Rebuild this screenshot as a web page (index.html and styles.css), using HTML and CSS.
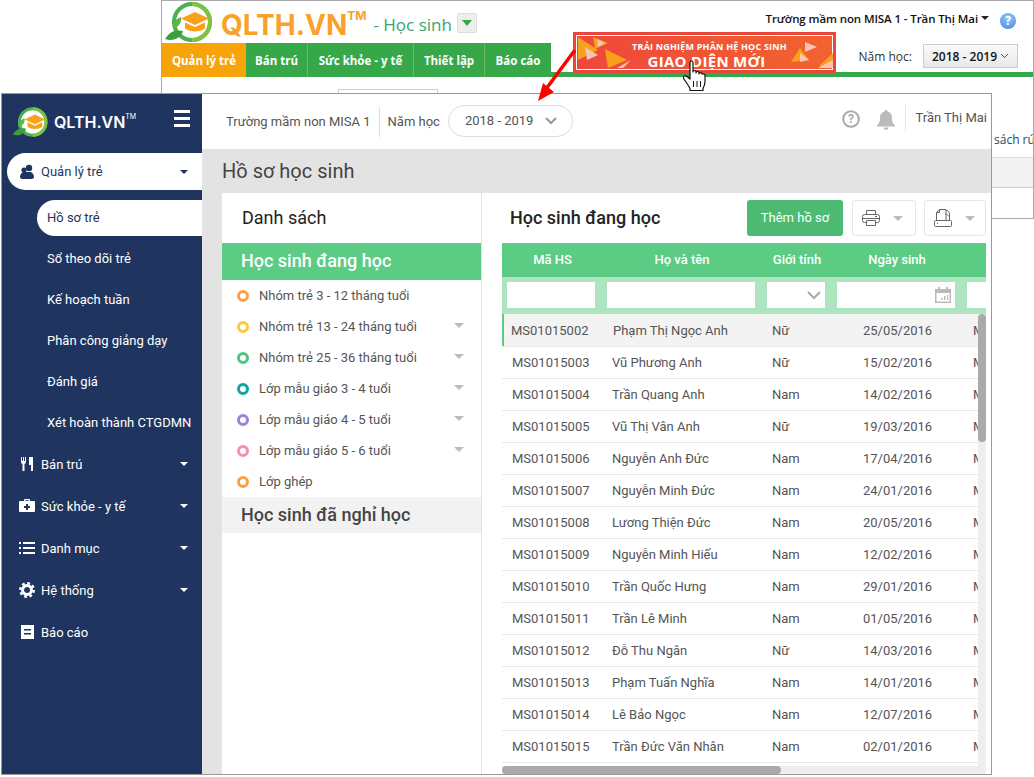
FILE: index.html
```html
<!DOCTYPE html>
<html lang="vi">

<head>
    <meta charset="UTF-8">
    <title>QLTH.VN - Hồ sơ học sinh</title>
    <link rel="stylesheet" href="styles.css">
</head>

<body>
    <svg class="defs" width="0" height="0">
        <symbol id="logo" viewBox="0 0 50 40">
            <circle cx="28" cy="20" r="18" fill="#fff" stroke="#4caf50" stroke-width="4" />
            <path d="M28 2a18 18 0 0 1 0 36" fill="none" stroke="#7cc243" stroke-width="4" />
            <path d="M1 37c4-7 10-10 18-8-2 7-10 11-18 8z" fill="#3f9e3c" />
            <path d="M9 27c-1-5 2-10 8-12 1 5-2 10-8 12z" fill="#5fb548" />
            <path d="M31 10l14 6.500-14 6.500-14-6.500z" fill="#f9a11b" />
            <path d="M21 20.500l10 4.500 10-4.500v6c-5 4-15 4-20 0z" fill="#f9a11b" />
        </symbol>
    </svg>

    <!-- man hinh cu -->
    <div class="old_win">
        <div class="old_top">
            <svg class="old_logo"><use href="#logo" /></svg>
            <span class="old_brand">QLTH.VN<sup>TM</sup></span>
            <span class="old_role">- Học sinh</span>
            <span class="role_btn"><i></i></span>
            <span class="old_user">Trường mầm non MISA 1 - Trần Thị Mai <i></i></span>
            <span class="old_help">?</span>
        </div>
        <div class="old_bar">
            <a href="javascript:;" class="active">Quản lý trẻ</a>
            <a href="javascript:;">Bán trú</a>
            <a href="javascript:;">Sức khỏe - y tế</a>
            <a href="javascript:;">Thiết lập</a>
            <a href="javascript:;">Báo cáo</a>
            <div class="old_year">
                <span>Năm học:</span>
                <b>2018 - 2019 <svg width="9" height="6" viewBox="0 0 9 6"><path d="M1 1l3.500 3.500L8 1" fill="none" stroke="#555" /></svg></b>
            </div>
        </div>
        <div class="old_input"></div>
        <div class="old_note">sách rút</div>
        <div class="old_thead"></div>
    </div>

    <div class="promo">
        <svg class="promo_bg" viewBox="0 0 257 35">
            <path d="M2 2l20 13L2 25z" fill="#f9a11b" />
            <path d="M9 12l13 8-11 5z" fill="#f7c6b0" />
            <path d="M17 2l15 6-13 6z" fill="#f9a11b" />
            <path d="M21 4l8 4-7 4z" fill="#f7c6b0" />
            <path d="M29 14l22 11-19 8z" fill="#f9a11b" />
            <path d="M41 33l14-8-8 8z" fill="#f7c6b0" />
            <path d="M229 7l12 5-12 5z" fill="#f7c6b0" />
            <path d="M215 27l9-14 9 12z" fill="#f9a11b" />
            <path d="M224 18l9 7-9 2z" fill="#f7c6b0" />
            <path d="M244 30l13-12v15h-13z" fill="#f9a11b" />
            <path d="M257 25l-15 8h15z" fill="#f7c6b0" />
        </svg>
        <span class="promo_sm">TRẢI NGHIỆM PHÂN HỆ HỌC SINH</span>
        <span class="promo_lg">GIAO DIỆN MỚI</span>
    </div>

    <svg class="arrow" width="50" height="60" viewBox="0 0 50 60">
        <path d="M39 3L10 42" stroke="#f00" stroke-width="3.500" fill="none" />
        <path d="M2 54L7 36 18 45z" fill="#f00" />
    </svg>

    <!-- man hinh moi -->
    <div class="new_win">
        <aside class="side">
            <div class="side_head">
                <svg class="side_logo"><use href="#logo" /></svg>
                <span class="side_brand">QLTH.VN<sup>TM</sup></span>
                <span class="burger"><i></i><i></i><i></i></span>
            </div>
            <a href="javascript:;" class="menu open">
                <svg class="ico" viewBox="0 0 16 16"><circle cx="10" cy="4" r="3.200" /><path d="M4 15c-1.500 0-3-.5-3-2 0-3 2-5 4-5h6c2 0 4 2 4 5 0 1.500-1.500 2-3 2z" /><circle cx="5" cy="6" r="2.600" /></svg>
                <span>Quản lý trẻ</span><i class="caret"></i>
            </a>
            <div class="sub">
                <a href="javascript:;" class="current">Hồ sơ trẻ</a>
                <a href="javascript:;">Sổ theo dõi trẻ</a>
                <a href="javascript:;">Kế hoạch tuần</a>
                <a href="javascript:;">Phân công giảng dạy</a>
                <a href="javascript:;">Đánh giá</a>
                <a href="javascript:;">Xét hoàn thành CTGDMN</a>
            </div>
            <a href="javascript:;" class="menu">
                <svg class="ico" viewBox="0 0 16 16"><path d="M2 1v5c0 1 1 2 1.500 2v7h2V8C6 8 7 7 7 6V1H6v4H5V1H4v4H3V1zM10 1h4v14h-2V9h-2z" /></svg>
                <span>Bán trú</span><i class="caret"></i>
            </a>
            <a href="javascript:;" class="menu">
                <svg class="ico" viewBox="0 0 16 16"><path fill-rule="evenodd" d="M5 3V2a1 1 0 0 1 1-1h4a1 1 0 0 1 1 1v1h4a1 1 0 0 1 1 1v9a1 1 0 0 1-1 1H1a1 1 0 0 1-1-1V4a1 1 0 0 1 1-1zm1.200 0h3.600V2.200H6.200zM7 6v2H5v2h2v2h2v-2h2V8H9V6z" /></svg>
                <span>Sức khỏe - y tế</span><i class="caret"></i>
            </a>
            <a href="javascript:;" class="menu">
                <svg class="ico" viewBox="0 0 16 16"><path d="M0 2h2v2H0zM4 2h12v2H4zM0 7h2v2H0zM4 7h12v2H4zM0 12h2v2H0zM4 12h12v2H4z" /></svg>
                <span>Danh mục</span><i class="caret"></i>
            </a>
            <a href="javascript:;" class="menu">
                <svg class="ico" viewBox="0 0 16 16"><circle cx="8" cy="8" r="4.500" fill="none" stroke="#fff" stroke-width="3" /><circle cx="8" cy="8" r="6.800" fill="none" stroke="#fff" stroke-width="2.400" stroke-dasharray="2.800 2.540" /></svg>
                <span>Hệ thống</span><i class="caret"></i>
            </a>
            <a href="javascript:;" class="menu">
                <svg class="ico" viewBox="0 0 16 16"><path fill-rule="evenodd" d="M2 1h13v14H2zm3 4v1.500h7V5zm0 4v1.500h7V9z" /></svg>
                <span>Báo cáo</span>
            </a>
        </aside>

        <div class="main">
            <header class="top">
                <span class="school">Trường mầm non MISA 1</span>
                <span class="year_lb">Năm học</span>
                <span class="year_pill">2018 - 2019
                    <svg width="12" height="8" viewBox="0 0 12 8"><path d="M1 1l5 5 5-5" fill="none" stroke="#999" stroke-width="2" /></svg>
                </span>
                <svg class="top_help" width="18" height="18" viewBox="0 0 18 18"><circle cx="9" cy="9" r="7.800" fill="none" stroke="#aaa" stroke-width="2" /><text x="9" y="13" text-anchor="middle" class="help_q">?</text></svg>
                <svg class="top_bell" width="18" height="20" viewBox="0 0 18 20"><path d="M9 0c1 0 1.500.7 1.500 1.500C14 2.500 15 5 15 8c0 4 1 5.500 3 7.500v1H0v-1C2 13.500 3 12 3 8c0-3 1-5.500 4.500-6.500C7.500.7 8 0 9 0zM6.500 17.500h5C11.500 19 10.300 20 9 20s-2.500-1-2.500-2.500z" fill="#bbb" /></svg>
                <span class="top_user">Trần Thị Mai</span>
            </header>
            <h1 class="page_title">Hồ sơ học sinh</h1>

            <div class="content">
                <section class="tree">
                    <h2>Danh sách</h2>
                    <div class="tree_on">Học sinh đang học</div>
                    <ul>
                        <li><i class="dot c1"></i>Nhóm trẻ 3 - 12 tháng tuổi</li>
                        <li><i class="dot c2"></i>Nhóm trẻ 13 - 24 tháng tuổi<b></b></li>
                        <li><i class="dot c3"></i>Nhóm trẻ 25 - 36 tháng tuổi<b></b></li>
                        <li><i class="dot c4"></i>Lớp mẫu giáo 3 - 4 tuổi<b></b></li>
                        <li><i class="dot c5"></i>Lớp mẫu giáo 4 - 5 tuổi<b></b></li>
                        <li><i class="dot c6"></i>Lớp mẫu giáo 5 - 6 tuổi<b></b></li>
                        <li><i class="dot c1"></i>Lớp ghép</li>
                    </ul>
                    <div class="tree_off">Học sinh đã nghỉ học</div>
                </section>

                <section class="list">
                    <div class="list_head">
                        <h2>Học sinh đang học</h2>
                        <a href="javascript:;" class="btn_add">Thêm hồ sơ</a>
                        <a href="javascript:;" class="btn_ico">
                            <svg width="18" height="18" viewBox="0 0 18 18" fill="none" stroke="#666"><path d="M4.500 5.500v-4h9v4M4.500 13.500h-2a2 2 0 0 1-2-2v-4a2 2 0 0 1 2-2h13a2 2 0 0 1 2 2v4a2 2 0 0 1-2 2h-2" /><path d="M4.500 11.500h9v5h-9zM.5 9.500h17M13 7.500h2" /></svg>
                            <i></i>
                        </a>
                        <a href="javascript:;" class="btn_ico">
                            <svg width="18" height="18" viewBox="0 0 18 18" fill="none" stroke="#666"><path d="M2.500 11.500v-8l3-3h6.500v11M5.500.5v3h-3M12 1.500h1.500l2 2.500v7.500M12 4.500l3 3" /><path d="M1.500 11.500h15a1 1 0 0 1 1 1v4a1 1 0 0 1-1 1h-15a1 1 0 0 1-1-1v-4a1 1 0 0 1 1-1zM3 14.500h1" /></svg>
                            <i></i>
                        </a>
                    </div>
                    <div class="grid_wrap">
                        <table class="grid">
                            <colgroup>
                                <col class="w1"><col class="w2"><col class="w3"><col class="w4"><col class="w5">
                            </colgroup>
                            <thead>
                                <tr class="row_title">
                                    <th>Mã HS</th>
                                    <th>Họ và tên</th>
                                    <th>Giới tính</th>
                                    <th>Ngày sinh</th>
                                    <th></th>
                                </tr>
                                <tr class="row_filter">
                                    <th><span class="fbox"></span></th>
                                    <th><span class="fbox"></span></th>
                                    <th><span class="fbox">
                                        <svg width="14" height="9" viewBox="0 0 14 9"><path d="M1 1l6 6 6-6" fill="none" stroke="#aaa" stroke-width="2" /></svg>
                                    </span></th>
                                    <th><span class="fbox">
                                        <svg width="16" height="16" viewBox="0 0 16 16"><path fill-rule="evenodd" d="M0 2h3V0h2v2h6V0h2v2h3v14H0zm1.500 4v8.500h13V6z" fill="#bbb" /><path d="M6 11h1.500v2H6zM9 9h1.500v4H9zM12 8h1.200v5H12z" fill="#bbb" /></svg>
                                    </span></th>
                                    <th><span class="fbox"></span></th>
                                </tr>
                            </thead>
                            <tbody>
                                <tr class="sel"><td>MS01015002</td><td>Phạm Thị Ngọc Anh</td><td>Nữ</td><td>25/05/2016</td><td>Mẫu giáo</td></tr>
                                <tr><td>MS01015003</td><td>Vũ Phương Anh</td><td>Nữ</td><td>15/02/2016</td><td>Mẫu giáo</td></tr>
                                <tr><td>MS01015004</td><td>Trần Quang Anh</td><td>Nam</td><td>14/02/2016</td><td>Mẫu giáo</td></tr>
                                <tr><td>MS01015005</td><td>Vũ Thị Vân Anh</td><td>Nữ</td><td>19/03/2016</td><td>Mẫu giáo</td></tr>
                                <tr><td>MS01015006</td><td>Nguyễn Anh Đức</td><td>Nam</td><td>17/04/2016</td><td>Mẫu giáo</td></tr>
                                <tr><td>MS01015007</td><td>Nguyễn Minh Đức</td><td>Nam</td><td>24/01/2016</td><td>Mẫu giáo</td></tr>
                                <tr><td>MS01015008</td><td>Lương Thiện Đức</td><td>Nam</td><td>20/05/2016</td><td>Mẫu giáo</td></tr>
                                <tr><td>MS01015009</td><td>Nguyễn Minh Hiếu</td><td>Nam</td><td>12/02/2016</td><td>Mẫu giáo</td></tr>
                                <tr><td>MS01015010</td><td>Trần Quốc Hưng</td><td>Nam</td><td>29/01/2016</td><td>Mẫu giáo</td></tr>
                                <tr><td>MS01015011</td><td>Trần Lê Minh</td><td>Nam</td><td>01/05/2016</td><td>Mẫu giáo</td></tr>
                                <tr><td>MS01015012</td><td>Đỗ Thu Ngân</td><td>Nữ</td><td>14/03/2016</td><td>Mẫu giáo</td></tr>
                                <tr><td>MS01015013</td><td>Phạm Tuấn Nghĩa</td><td>Nam</td><td>14/01/2016</td><td>Mẫu giáo</td></tr>
                                <tr><td>MS01015014</td><td>Lê Bảo Ngọc</td><td>Nam</td><td>12/07/2016</td><td>Mẫu giáo</td></tr>
                                <tr><td>MS01015015</td><td>Trần Đức Văn Nhân</td><td>Nam</td><td>02/01/2016</td><td>Mẫu giáo</td></tr>
                            </tbody>
                        </table>
                        <div class="scroll_y"><i></i></div>
                        <div class="scroll_x"><i></i></div>
                    </div>
                </section>
            </div>
        </div>
    </div>

    <svg class="hand" width="24" height="33" viewBox="0 0 24 33">
        <path d="M7 2.500c0-2 3-2 3 0v9.500c0-2 3-2 3 0v1c0-2 3-2 3 0v1c0-1.800 3-1.800 3 0 0 0 3-1 3 1.500v6c0 3-1 5-2 7v2H7v-2c-1-2-3-5-5-8-2-2-2-4-.500-4.500S4 16 7 19z" fill="#fff" stroke="#111" stroke-width="1.200" stroke-linejoin="round" />
        <path d="M10.500 21v6M14 21v6M17.500 21v6" stroke="#111" stroke-width="1" />
    </svg>
</body>

</html>
```
FILE: styles.css
```css
* {
    margin: 0;
    padding: 0;
    box-sizing: border-box;
}

body {
    position: relative;
    width: 1034px;
    height: 777px;
    overflow: hidden;
    background: #fff;
    font-family: Roboto, "Noto Sans", sans-serif;
    font-size: 13px;
    color: #555;
}

a {
    text-decoration: none;
    color: inherit;
}

i {
    display: block;
}

ul {
    list-style: none;
}

.defs {
    position: absolute;
}

/* man hinh cu */
.old_win {
    position: absolute;
    left: 161px;
    top: 0;
    width: 873px;
    height: 219px;
    border: 1px solid #aaa;
    overflow: hidden;
    font-family: "Open Sans", "Noto Sans", sans-serif;
}

.old_top {
    display: flex;
    align-items: center;
    height: 42px;
}

.old_logo {
    width: 50px;
    height: 40px;
    margin-left: 2px;
}

.old_brand {
    margin: 5px 0 0 7px;
    font-family: Inter, sans-serif;
    font-size: 28px;
    font-weight: 700;
    color: #f9a12b;
    line-height: 40px;
}

.old_brand sup {
    font-size: 12px;
    vertical-align: 15px;
    line-height: 0;
}

.old_role {
    margin: 5px 0 0 7px;
    font-size: 17px;
    color: #36a56f;
}

.role_btn {
    display: flex;
    align-items: center;
    justify-content: center;
    width: 20px;
    height: 20px;
    margin: 2px 0 0 5px;
    background: #eee;
    border: 1px solid #ddd;
    border-radius: 2px;
}

.role_btn i {
    border: 5px solid transparent;
    border-top: 6px solid #37a84a;
    border-bottom: 0;
}

.old_user {
    display: flex;
    align-items: center;
    gap: 3px;
    margin-left: auto;
    margin-top: -8px;
    font-size: 11.500px;
    font-weight: 600;
    letter-spacing: -.1px;
    color: #111;
}

.old_user i {
    border: 4px solid transparent;
    border-top: 4px solid #222;
    border-bottom: 0;
}

.old_help {
    width: 16px;
    height: 16px;
    margin: -2px 17px 0 11px;
    border-radius: 50%;
    background: radial-gradient(circle at 50% 30%, #9cc8f5, #3c87dd);
    color: #fff;
    font-size: 12px;
    font-weight: 700;
    line-height: 16px;
    text-align: center;
}

.old_bar {
    display: flex;
    height: 34px;
    border-bottom: 5px solid #37a84a;
}

.old_bar > a {
    flex: none;
    height: 34px;
    border-right: 1px solid #6dbb55;
    background: #37a84a;
    color: #fff;
    font-size: 11.500px;
    font-weight: 700;
    line-height: 35px;
    text-align: center;
}

.old_bar > a:nth-child(1) { width: 84px; }
.old_bar > a:nth-child(2) { width: 62px; }
.old_bar > a:nth-child(3) { width: 106px; }
.old_bar > a:nth-child(4) { width: 71px; }
.old_bar > a:nth-child(5) { width: 66px; border-right: 0; }

.old_bar > a.active {
    background: #f7a30a;
    border-right: 0;
}

.old_year {
    display: flex;
    align-items: flex-start;
    gap: 11px;
    margin-left: auto;
    margin-right: 15px;
    padding-top: 1px;
    font-size: 12px;
    color: #333;
}

.old_year span {
    line-height: 26px;
}

.old_year b {
    display: flex;
    align-items: center;
    justify-content: center;
    gap: 3px;
    width: 95px;
    height: 24px;
    border: 1px solid #ccc;
    background: linear-gradient(#fafafa, #e8e8e8);
    color: #111;
    font-weight: 600;
}

.old_input {
    width: 100px;
    height: 20px;
    margin: 12px 0 0 176px;
    border: 1px solid #ccc;
}

.old_note {
    margin-top: 21px;
    height: 20px;
    padding-left: 832px;
    font-size: 12px;
    line-height: 20px;
    color: #1c4a6b;
    white-space: nowrap;
}

.old_thead {
    height: 31px;
    margin-top: 7px;
    border-top: 1px solid #ddd;
    border-bottom: 1px solid #ccc;
    background: #f2f2f2;
}

/* banner */
.promo {
    position: absolute;
    left: 573px;
    top: 32px;
    display: flex;
    flex-direction: column;
    align-items: center;
    width: 263px;
    height: 41px;
    padding-top: 6px;
    border: 3px solid #e9473e;
    outline: 1px solid #fff;
    outline-offset: -4px;
    background: linear-gradient(90deg, #ef473c, #f2622f);
    color: #fff;
    font-family: "Open Sans", sans-serif;
    font-weight: 700;
    overflow: hidden;
}

.promo_bg {
    position: absolute;
    left: 0;
    top: 0;
    width: 100%;
    height: 100%;
}

.promo_sm {
    position: relative;
    margin-left: 10px;
    font-size: 9px;
    line-height: 12px;
    letter-spacing: .2px;
}

.promo_lg {
    position: relative;
    margin-left: 4px;
    font-size: 15px;
    line-height: 17px;
    letter-spacing: .3px;
}

.arrow {
    position: absolute;
    left: 536px;
    top: 47px;
    z-index: 3;
}

.hand {
    position: absolute;
    left: 683px;
    top: 60px;
    z-index: 3;
}

/* man hinh moi */
.new_win {
    position: absolute;
    left: 1px;
    top: 93px;
    z-index: 2;
    display: flex;
    width: 991px;
    height: 682px;
    border: 1px solid #999;
    background: #fff;
    overflow: hidden;
}

.side {
    flex: none;
    width: 200px;
    background: #1f3560;
    color: #fff;
}

.side_head {
    display: flex;
    align-items: center;
    height: 59px;
    padding: 0 12px 4px 10px;
}

.side_logo {
    width: 37px;
    height: 30px;
}

.side_brand {
    margin-left: 5px;
    font-family: Inter, sans-serif;
    font-size: 16px;
    font-weight: 600;
}

.side_brand sup {
    font-size: 7px;
    font-weight: 400;
    vertical-align: 9px;
    line-height: 0;
}

.burger {
    margin-left: auto;
    margin-top: -6px;
}

.burger i {
    width: 16px;
    height: 3px;
    margin: 4px 0;
    background: #fff;
}

.menu {
    display: flex;
    align-items: center;
    height: 42px;
    padding-left: 17px;
}

.menu .ico {
    flex: none;
    width: 16px;
    height: 16px;
    margin-right: 6px;
    fill: #fff;
}

.menu .caret {
    margin-left: auto;
    margin-right: 14px;
    border: 4px solid transparent;
    border-top: 4px solid #fff;
    border-bottom: 0;
}

.menu.open {
    height: 37px;
    margin-left: 5px;
    padding-left: 12px;
    border-radius: 19px 0 0 19px;
    background: #fff;
    color: #1f3560;
}

.menu.open .ico {
    fill: #1f3560;
}

.menu.open .caret {
    border-top-color: #1f3560;
}

.sub {
    display: flex;
    flex-direction: column;
    gap: 5px;
    padding: 10px 0 2px 35px;
}

.sub a {
    height: 36px;
    padding-left: 10px;
    line-height: 36px;
    white-space: nowrap;
}

.sub a.current {
    border-radius: 18px 0 0 18px;
    background: #fff;
    color: #1f3560;
}

.main {
    flex: 1;
    min-width: 0;
    display: flex;
    flex-direction: column;
    background: #e3e3e3;
}

.top {
    flex: none;
    display: flex;
    align-items: center;
    height: 55px;
    padding-left: 24px;
    background: #fff;
}

.school {
    padding-right: 8px;
    border-right: 1px solid #ddd;
    line-height: 30px;
    white-space: nowrap;
}

.year_lb {
    margin-left: 8px;
}

.year_pill {
    display: flex;
    align-items: center;
    justify-content: space-between;
    width: 125px;
    height: 32px;
    margin: -2px 0 0 8px;
    padding: 0 15px 0 16px;
    border: 1px solid #ddd;
    border-radius: 16px;
}

.top_help {
    margin-left: auto;
    margin-top: -5px;
}

.help_q {
    font-size: 12px;
    font-weight: 700;
    fill: #aaa;
}

.top_bell {
    margin-left: 17px;
    margin-top: -4px;
}

.top_user {
    height: 26px;
    margin-left: 10px;
    margin-top: -7px;
    padding: 0 4px 0 9px;
    border-left: 1px solid #e5e5e5;
    font-size: 13px;
    line-height: 26px;
    white-space: nowrap;
}

.page_title {
    flex: none;
    height: 44px;
    padding-left: 20px;
    font-size: 20px;
    font-weight: 400;
    line-height: 44px;
    color: #444;
}

.content {
    flex: 1;
    min-height: 0;
    display: flex;
    margin-left: 20px;
    background: #fff;
}

.tree {
    flex: none;
    width: 260px;
    border-right: 1px solid #e3e3e3;
}

.tree h2 {
    height: 50px;
    padding-left: 20px;
    font-size: 18px;
    font-weight: 400;
    line-height: 50px;
    color: #222;
}

.tree_on,
.tree_off {
    height: 36px;
    padding-left: 19px;
    font-size: 18px;
    font-weight: 500;
    line-height: 36px;
}

.tree_on {
    height: 37px;
    background: #5ccb84;
    color: #fff;
}

.tree_off {
    background: #f2f2f2;
    color: #444;
}

.tree ul {
    height: 217px;
}

.tree li {
    display: flex;
    align-items: center;
    height: 31px;
    padding: 0 17px 0 15px;
}

.dot {
    flex: none;
    width: 12px;
    height: 12px;
    margin-right: 10px;
    border: 3px solid;
    border-radius: 50%;
}

.c1 { border-color: #ff9f45; }
.c2 { border-color: #ffc93a; }
.c3 { border-color: #4fc57e; }
.c4 { border-color: #0fa5a8; }
.c5 { border-color: #9b82d8; }
.c6 { border-color: #fb8cb0; }

.tree li b {
    margin-left: auto;
    margin-top: -3px;
    border: 5px solid transparent;
    border-top: 5px solid #bbb;
    border-bottom: 0;
}

.list {
    flex: 1;
    min-width: 0;
    display: flex;
    flex-direction: column;
    padding: 0 5px 0 20px;
}

.list_head {
    flex: none;
    display: flex;
    align-items: flex-start;
    gap: 9px;
    height: 50px;
    padding: 7px 0 0 8px;
}

.list_head h2 {
    margin-right: auto;
    font-size: 18px;
    font-weight: 500;
    line-height: 36px;
    color: #222;
}

.btn_add {
    width: 96px;
    height: 36px;
    border-radius: 3px;
    background: #4cba72;
    color: #fff;
    line-height: 36px;
    text-align: center;
}

.btn_ico {
    display: flex;
    align-items: center;
    justify-content: space-between;
    width: 64px;
    height: 36px;
    padding: 0 12px 0 9px;
    border: 1px solid #e6e6e6;
    border-radius: 3px;
}

.btn_ico + .btn_ico {
    width: 62px;
    margin-left: -1px;
    padding-right: 10px;
}

.btn_ico i {
    border: 5px solid transparent;
    border-top: 5px solid #bbb;
    border-bottom: 0;
}

.grid_wrap {
    position: relative;
    flex: 1;
    min-height: 0;
    overflow: hidden;
}

.grid {
    width: 484px;
    table-layout: fixed;
    border-collapse: collapse;
}

.w1 { width: 99px; }
.w2 { width: 160px; }
.w3 { width: 70px; }
.w4 { width: 130px; }
.w5 { width: 25px; }

.row_title th {
    height: 34px;
    padding: 0 0 2px 2px;
    background: #5ccb84;
    color: #fff;
    font-weight: 500;
}

.row_filter th {
    height: 37px;
    padding: 0 6px 1px;
    background: #aee4bf;
    vertical-align: middle;
}

.row_filter th:first-child {
    padding-left: 5px;
}

.row_filter th:last-child {
    padding-right: 0;
}

.fbox {
    display: flex;
    align-items: center;
    justify-content: flex-end;
    height: 26px;
    padding-right: 4px;
    background: #fff;
}

.grid td {
    height: 32px;
    border-bottom: 1px solid #e8e8e8;
    overflow: hidden;
    white-space: nowrap;
}

.grid td:nth-child(1) { padding-left: 10px; }
.grid td:nth-child(2) { padding-left: 11px; }
.grid td:nth-child(3) { padding-left: 11px; }
.grid td:nth-child(4) { padding-left: 32px; }
.grid td:nth-child(5) { padding-left: 12px; }

.grid tr.sel td {
    padding-top: 1px;
    background: #f3f3f3;
}

.grid tr.sel td:first-child {
    padding-left: 9px;
    box-shadow: inset 2px 0 0 #5ccb84;
}

.grid tr.sel td:nth-child(2) {
    padding-left: 12px;
}

.scroll_y {
    position: absolute;
    right: 0;
    top: 71px;
    bottom: 8px;
    width: 8px;
    background: #eee;
}

.scroll_y i {
    width: 8px;
    height: 128px;
    border-radius: 4px;
    background: #aaa;
}

.scroll_x {
    position: absolute;
    left: 0;
    right: 0;
    bottom: 0;
    height: 8px;
    background: #eee;
}

.scroll_x i {
    width: 279px;
    height: 8px;
    border-radius: 4px;
    background: #aaa;
}
```
